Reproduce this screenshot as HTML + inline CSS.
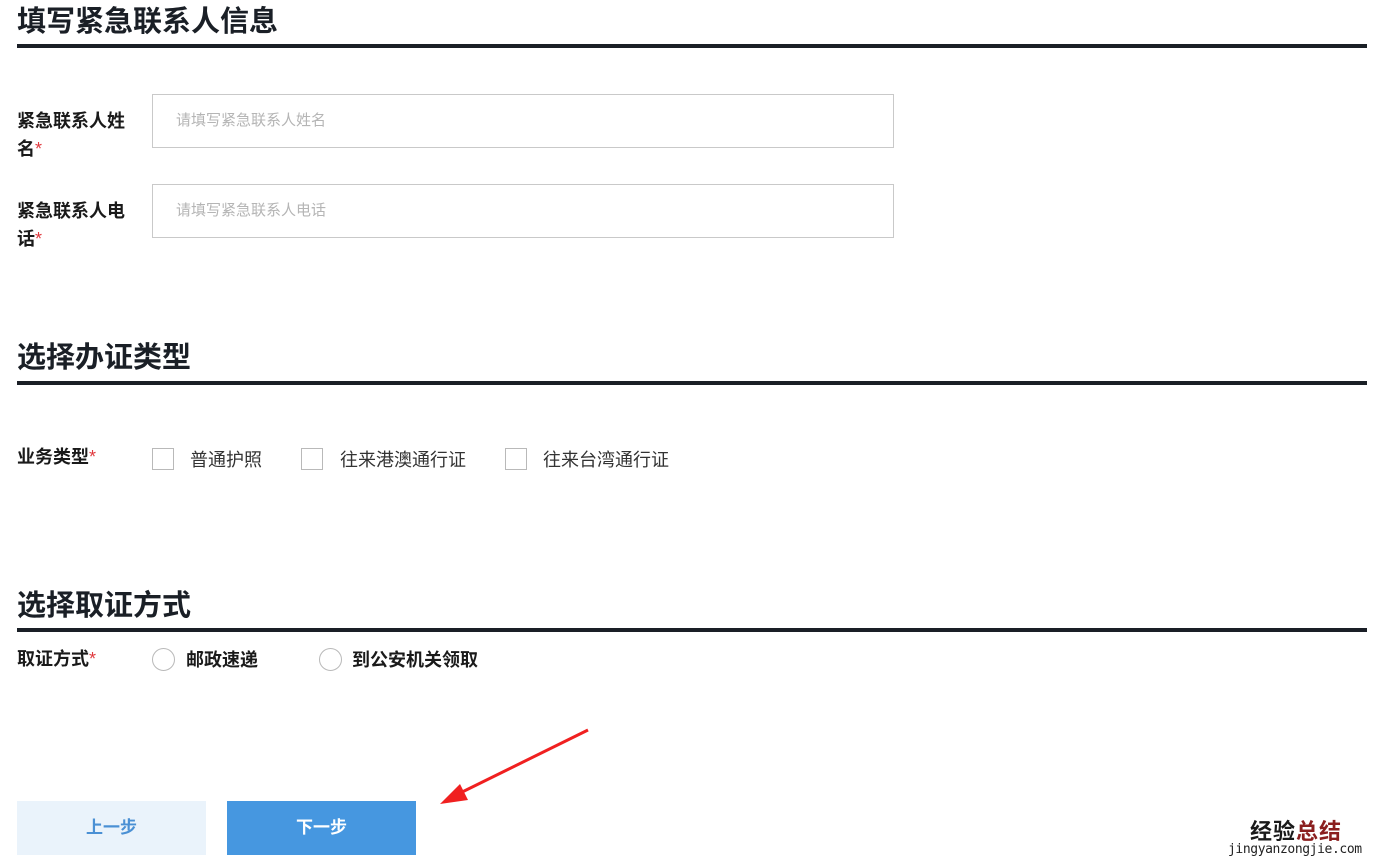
<!DOCTYPE html>
<html><head><meta charset="utf-8"><style>
body{margin:0;width:1378px;height:865px;background:#fff;font-family:"Liberation Sans","Noto Sans CJK SC",sans-serif;position:relative;overflow:hidden;color:#1a1a1a}
.a{position:absolute}
h2{position:absolute;left:17px;margin:0;font-size:29px;font-weight:bold;color:#1a1f26;line-height:36px}
.line{position:absolute;left:17px;width:1350px;height:4px;background:#1a1f26}
.lbl{position:absolute;left:17px;font-size:18px;font-weight:bold;line-height:28px;width:112px}
.r{color:#e0393e;font-weight:normal}
.inp{position:absolute;left:152px;height:54px;border:1px solid #c9c9c9;font-size:15px;color:#b5b5b5;line-height:52px;padding-left:23px;box-sizing:border-box;width:742px}
.cb{position:absolute;width:22px;height:22px;border:1px solid #b9b9b9;box-sizing:border-box;top:448px}
.ct{position:absolute;top:446px;font-size:18px;color:#333}
.rd{position:absolute;width:23px;height:23px;border:1px solid #b9b9b9;border-radius:50%;box-sizing:border-box;top:648px}
.rt{position:absolute;top:646px;font-size:18px;font-weight:bold}
.btn{position:absolute;top:801px;width:189px;height:54px;line-height:54px;text-align:center;font-size:17px;font-weight:bold}
</style></head><body>
<h2 style="top:4px">填写紧急联系人信息</h2><div class="line" style="top:44px"></div>
<div class="lbl" style="top:107px">紧急联系人姓名<span class="r">*</span></div>
<div class="inp" style="top:94px">请填写紧急联系人姓名</div>
<div class="lbl" style="top:197px">紧急联系人电话<span class="r">*</span></div>
<div class="inp" style="top:184px">请填写紧急联系人电话</div>
<h2 style="top:340px">选择办证类型</h2><div class="line" style="top:381px"></div>
<div class="lbl" style="top:443px">业务类型<span class="r">*</span></div>
<div class="cb" style="left:152px"></div><div class="ct" style="left:190px">普通护照</div>
<div class="cb" style="left:301px"></div><div class="ct" style="left:340px">往来港澳通行证</div>
<div class="cb" style="left:505px"></div><div class="ct" style="left:543px">往来台湾通行证</div>
<h2 style="top:588px">选择取证方式</h2><div class="line" style="top:628px"></div>
<div class="lbl" style="top:645px">取证方式<span class="r">*</span></div>
<div class="rd" style="left:152px"></div><div class="rt" style="left:186px">邮政速递</div>
<div class="rd" style="left:319px"></div><div class="rt" style="left:352px">到公安机关领取</div>
<svg class="a" style="left:430px;top:720px" width="170" height="90"><line x1="158" y1="10" x2="20" y2="78" stroke="#f02020" stroke-width="3"/><polygon points="10,84 30,64 38,80" fill="#f02020"/></svg>
<div class="btn" style="left:17px;background:#eaf3fb;color:#4a90d4">上一步</div>
<div class="btn" style="left:227px;background:#4697e0;color:#fff">下一步</div>
<div class="a" style="left:1250px;top:814px;font-size:22px;font-weight:bold;letter-spacing:1px">经验<span style="color:#8b1f1f">总结</span></div>
<div class="a" style="left:1228px;top:842px;font-size:13px;font-family:'DejaVu Sans Mono',monospace;color:#222;letter-spacing:-0.4px">jingyanzongjie.com</div>
</body></html>
